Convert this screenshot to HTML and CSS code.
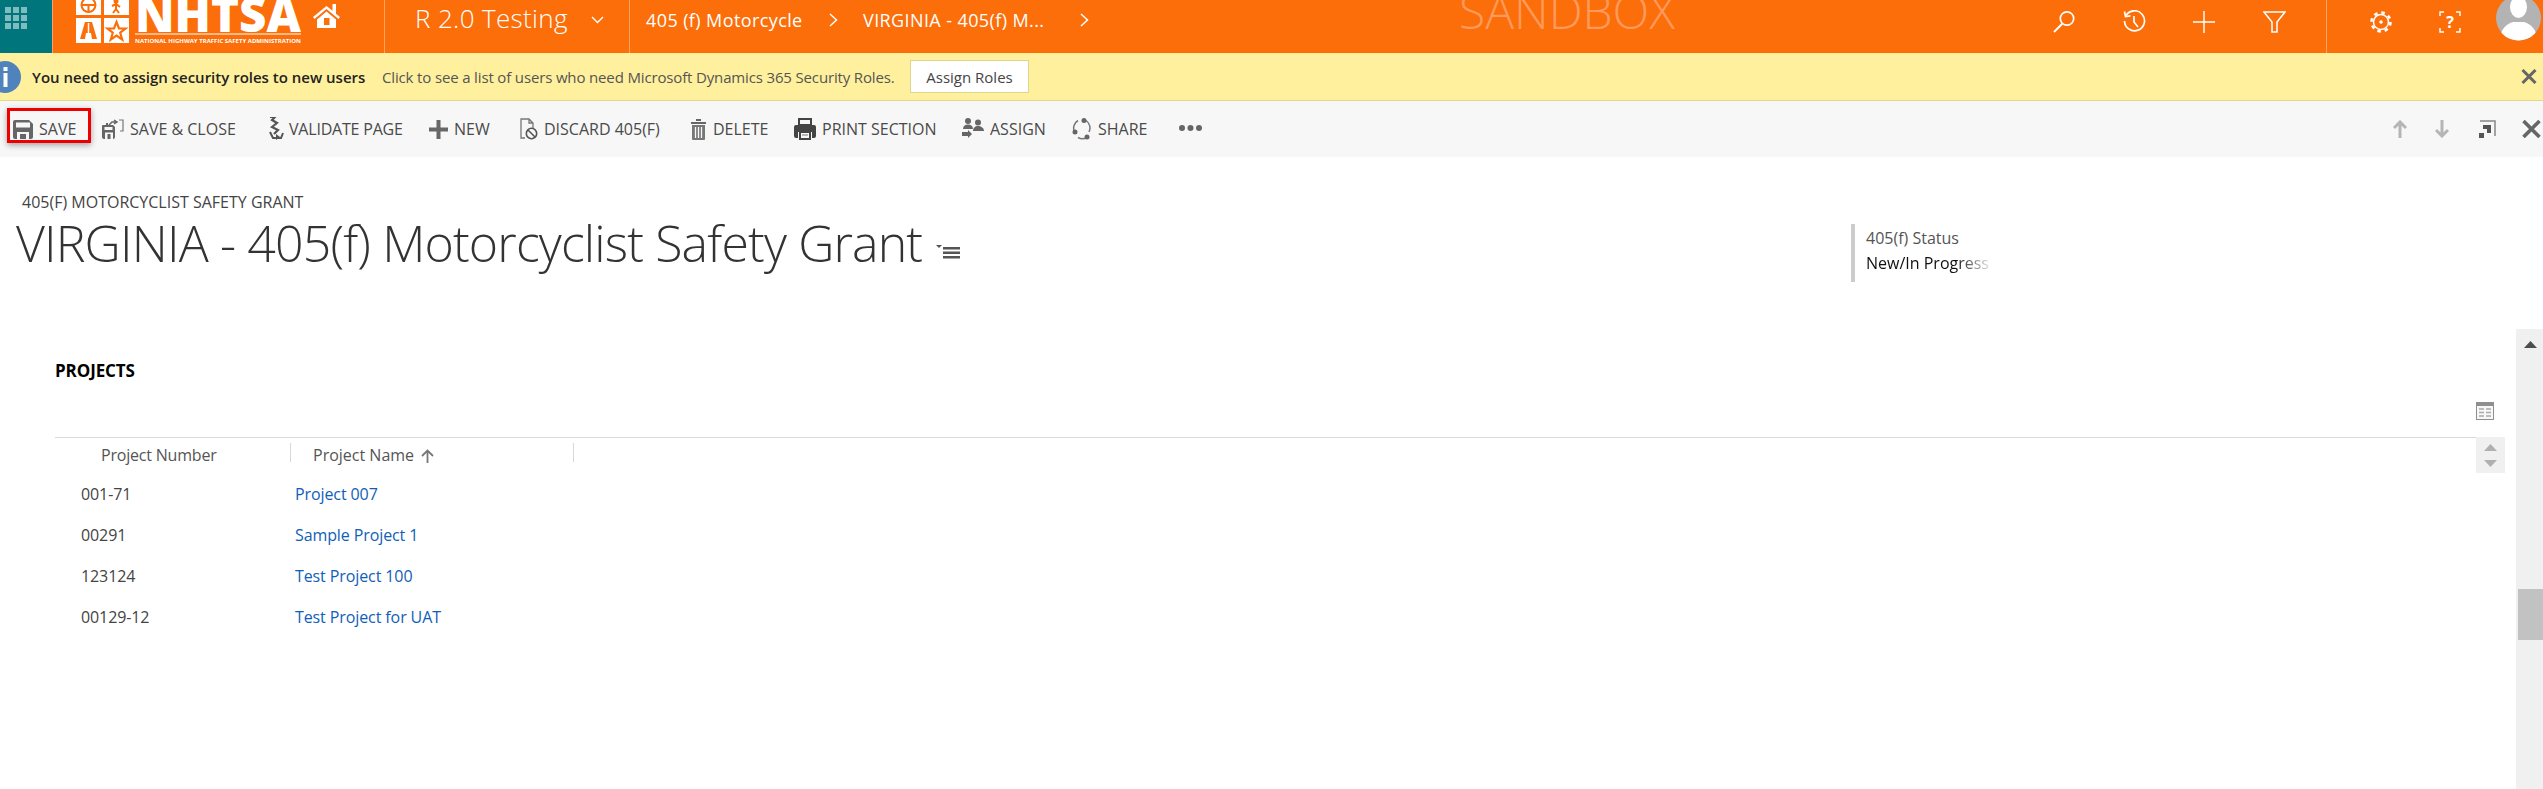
FILE: index.html
```html
<!DOCTYPE html>
<html lang="en">
<head>
<meta charset="utf-8">
<title>VIRGINIA - 405(f) Motorcyclist Safety Grant</title>
<link rel="stylesheet" href="styles.css">
</head>
<body>
<header class="topbar">
  <div class="waffle">
    <svg width="22" height="22" viewBox="0 0 22 22" fill="#7fbcc0"><rect x="0" y="0" width="6" height="6"/><rect x="8" y="0" width="6" height="6"/><rect x="16" y="0" width="6" height="6"/><rect x="0" y="8" width="6" height="6"/><rect x="8" y="8" width="6" height="6"/><rect x="16" y="8" width="6" height="6"/><rect x="0" y="16" width="6" height="6"/><rect x="8" y="16" width="6" height="6"/><rect x="16" y="16" width="6" height="6"/></svg>
  </div>
  <div class="brand">
    <svg class="logo" width="225" height="53" viewBox="0 0 225 53">
      <rect x="0" y="-4" width="25" height="19" fill="#fff"/>
      <rect x="28" y="-4" width="25" height="19" fill="#fff"/>
      <rect x="0" y="18" width="25" height="25" fill="#fff"/>
      <rect x="28" y="18" width="25" height="25" fill="#fff"/>
      <circle cx="12.500" cy="5" r="7" fill="none" stroke="#fb6e09" stroke-width="2"/>
      <path d="M6 5h13M12.500 5v7" stroke="#fb6e09" stroke-width="2"/>
      <circle cx="40" cy="1" r="2.500" fill="#fb6e09"/>
      <path d="M40 3v6M36 6l4-2 4 3M40 9l-3 4M40 9l3 4" stroke="#fb6e09" stroke-width="2" fill="none"/>
      <path d="M4 39 9 22h7l5 17h-5l-1-6h-5l-1 6z" fill="#fb6e09"/>
      <path d="M12.500 23v14" stroke="#fff" stroke-width="1.500"/>
      <path d="M40.500 22l2.500 6.500h6.500l-5.300 4.200 2 6.800-5.700-4-5.700 4 2-6.800-5.300-4.200H38z" fill="none" stroke="#fb6e09" stroke-width="2.200"/>
      <text class="logo-word" x="59" y="32" textLength="166" lengthAdjust="spacingAndGlyphs">NHTSA</text>
      <rect x="59" y="33" width="166" height="2" fill="#fdb888"/>
      <text class="logo-sub" x="59" y="43" textLength="166" lengthAdjust="spacingAndGlyphs">NATIONAL HIGHWAY TRAFFIC SAFETY ADMINISTRATION</text>
    </svg>
    <svg class="home" width="29" height="27" viewBox="0 0 29 27"><path d="M14.500 5 1 16l1.500 2L14.500 8l12 10 1.500-2-4-3.300V3h-3.500v6.800z" fill="#fff"/><path d="M5 18.500 14.500 10.500 24 18.500V27H5z" fill="#fff"/><rect x="12" y="17" width="5.500" height="7" fill="#fb6e09"/></svg>
  </div>
  <div class="app">
    <span class="app-name">R 2.0 Testing</span>
    <svg class="chev-down" width="13" height="8" viewBox="0 0 13 8"><path d="M1 1l5.500 5.500L12 1" fill="none" stroke="#fff" stroke-width="1.400"/></svg>
  </div>
  <nav class="crumbs">
    <span class="crumb">405 (f) Motorcycle</span>
    <svg width="9" height="14" viewBox="0 0 9 14"><path d="M1 1l6.500 6L1 13" fill="none" stroke="#fff" stroke-width="1.500"/></svg>
    <span class="crumb">VIRGINIA - 405(f) M...</span>
    <svg width="9" height="14" viewBox="0 0 9 14"><path d="M1 1l6.500 6L1 13" fill="none" stroke="#fff" stroke-width="1.500"/></svg>
  </nav>
  <div class="sandbox">SANDBOX</div>
  <div class="top-icons">
    <svg width="22" height="23" viewBox="0 0 22 23"><circle cx="14" cy="8.500" r="6.700" fill="none" stroke="#fff" stroke-width="1.700"/><path d="M9.500 13.500 1 22" stroke="#fff" stroke-width="2"/></svg>
    <svg width="23" height="23" viewBox="0 0 23 23" fill="none" stroke="#fff" stroke-width="1.700"><path d="M3 5.500A10 10 0 1 1 1.500 11"/><path d="M1.500 1.500 2.500 6.500 7.500 5.800"/><path d="M11 6v6l4 5"/></svg>
    <svg width="22" height="22" viewBox="0 0 22 22"><path d="M0 11h22M11 0v22" stroke="#fff" stroke-width="1.400"/></svg>
    <svg width="23" height="22" viewBox="0 0 23 22"><path d="M1 1h21l-8 10v10H9V11z" fill="none" stroke="#fff" stroke-width="1.500"/></svg>
  </div>
  <div class="top-tools">
    <svg width="22" height="22" viewBox="0 0 22 22" fill="none" stroke="#fff"><circle cx="11" cy="11" r="7.500" stroke-width="1.500"/><circle cx="11" cy="11" r="9.500" stroke-width="2.600" stroke-dasharray="3.600 3.860"/><circle cx="11" cy="11" r="1.800" fill="#fff" stroke="none"/></svg>
    <svg width="22" height="22" viewBox="0 0 22 22"><path d="M5 1H1v4M17 1h4v4M5 21H1v-4M17 21h4v-4" fill="none" stroke="#fff" stroke-width="1.400"/><text class="help-q" x="11" y="17" text-anchor="middle">?</text></svg>
    <svg class="avatar" width="45" height="41" viewBox="0 0 45 41"><defs><clipPath id="av"><circle cx="22.500" cy="18" r="22.500"/></clipPath></defs><g clip-path="url(#av)"><rect x="0" y="-5" width="45" height="46" fill="#b3b3b3"/><ellipse cx="22.500" cy="7" rx="8.500" ry="11" fill="#fff"/><path d="M4 41c0-13 7-17 13-19h11c6 2 13 6 13 19z" fill="#fff"/></g></svg>
  </div>
</header>

<section class="notice">
  <svg class="info" width="21" height="32" viewBox="11 0 21 32"><circle cx="16" cy="16" r="16" fill="#5083bb"/><rect x="14.500" y="6" width="4" height="4" fill="#fff"/><rect x="14.500" y="12" width="4" height="14" fill="#fff"/></svg>
  <strong class="notice-title">You need to assign security roles to new users</strong>
  <span class="notice-msg">Click to see a list of users who need Microsoft Dynamics 365 Security Roles.</span>
  <button class="assign-btn" type="button">Assign Roles</button>
  <svg class="notice-close" width="16" height="15" viewBox="0 0 16 15"><path d="M1.500 1 14.500 14M14.500 1 1.500 14" stroke="#666" stroke-width="3"/></svg>
</section>

<div class="toolbar">
  <div class="tools">
    <span class="tool tool-save">
      <svg width="20" height="19" viewBox="0 0 20 19"><path d="M0 2a2 2 0 0 1 2-2h14l4 4v13a2 2 0 0 1-2 2H2a2 2 0 0 1-2-2z" fill="#666"/><rect x="3" y="2.500" width="14" height="5" fill="#f7f7f7"/><rect x="4" y="12" width="12" height="7" fill="#f7f7f7"/><rect x="7" y="14" width="6" height="5" fill="#666"/></svg>
      SAVE
    </span>
    <span class="tool">
      <svg width="22" height="20" viewBox="0 0 22 20"><path d="M0 7a1 1 0 0 1 1-1h3V4h2v2h5l2 2v10a2 2 0 0 1-2 2H2a2 2 0 0 1-2-2z" fill="#666"/><rect x="2.500" y="8" width="8" height="3" fill="#f7f7f7"/><rect x="3" y="13.500" width="8" height="6.500" fill="#f7f7f7"/><rect x="5.500" y="15" width="3" height="5" fill="#666"/><path d="M7 6l3-3h4M12 1l3 2-3 2" fill="none" stroke="#666" stroke-width="1.500"/><path d="M17 1h4v11h-3" fill="none" stroke="#777" stroke-width="1.200"/></svg>
      SAVE &amp; CLOSE
    </span>
    <span class="tool tool-tight">
      <svg width="17" height="24" viewBox="0 0 17 24"><path d="M3 0h5L5 3l5 3-5 4 6 3-4 4" fill="none" stroke="#555" stroke-width="2.200"/><path d="M3 15l3 6h8l2-5" fill="none" stroke="#555" stroke-width="2"/><path d="M9 17v6l4-3z" fill="#555"/></svg>
      VALIDATE PAGE
    </span>
    <span class="tool">
      <svg width="19" height="19" viewBox="0 0 19 19"><path d="M9.500 0v19M0 9.500h19" stroke="#666" stroke-width="4"/></svg>
      NEW
    </span>
    <span class="tool">
      <svg width="18" height="22" viewBox="0 0 18 22" fill="none" stroke="#777" stroke-width="1.300"><path d="M5 20H1V1h8l4 4v5M9 1v4h4"/><circle cx="11.500" cy="15.500" r="5.200" stroke="#555" stroke-width="1.600"/><path d="M8 12l7 7" stroke="#555" stroke-width="1.600"/></svg>
      DISCARD 405(F)
    </span>
    <span class="tool">
      <svg width="17" height="22" viewBox="0 0 17 22"><path d="M1 4h15v2H1zM6 1h5v2H6z" fill="#666"/><path d="M2 7h13v14a1 1 0 0 1-1 1H3a1 1 0 0 1-1-1z" fill="#777"/><path d="M5.500 9v11M8.500 9v11M11.500 9v11" stroke="#f7f7f7" stroke-width="1.300"/></svg>
      DELETE
    </span>
    <span class="tool">
      <svg width="22" height="22" viewBox="0 0 22 22"><path d="M5 1h12v6H5z" fill="none" stroke="#444" stroke-width="2"/><path d="M2 7h18a2 2 0 0 1 2 2v9a2 2 0 0 1-2 2h-2v-6H4v6H2a2 2 0 0 1-2-2V9a2 2 0 0 1 2-2z" fill="#444"/><path d="M5 14h12v8H5z" fill="#444"/><path d="M7 15h8v5H7z" fill="#f7f7f7"/><path d="M8 17h6" stroke="#777"/></svg>
      PRINT SECTION
    </span>
    <span class="tool">
      <svg width="22" height="22" viewBox="0 0 22 22" fill="#666"><circle cx="6" cy="3" r="3"/><path d="M1 11c0-3 2-4.500 5-4.500s5 1.500 5 4.500z"/><circle cx="16" cy="4.500" r="3"/><path d="M11 13c0-3 2-5 5-5s6 2 6 5z"/><path d="M0 14h6v-2l4 4-4 4v-2H0z"/></svg>
      ASSIGN
    </span>
    <span class="tool">
      <svg width="20" height="22" viewBox="0 0 20 22" fill="none"><path d="M6 2.500A9 9 0 0 0 2.500 14M6 19.500a9 9 0 0 0 9 0M17 14A9 9 0 0 0 14 2.500" stroke="#777" stroke-width="1.500"/><circle cx="12" cy="2.500" r="2.500" fill="#666"/><circle cx="3" cy="14" r="2.500" fill="#666"/><circle cx="15" cy="19" r="2.500" fill="#666"/></svg>
      SHARE
    </span>
    <svg class="more" width="23" height="6" viewBox="0 0 23 6" fill="#666"><circle cx="3" cy="3" r="3"/><circle cx="11.500" cy="3" r="3"/><circle cx="20" cy="3" r="3"/></svg>
  </div>
  <div class="tool-right">
    <svg width="14" height="18" viewBox="0 0 14 18"><path d="M7 18V2M1 8l6-6 6 6" fill="none" stroke="#b5b5b5" stroke-width="3"/></svg>
    <svg width="14" height="18" viewBox="0 0 14 18"><path d="M7 0v16M1 10l6 6 6-6" fill="none" stroke="#b5b5b5" stroke-width="3"/></svg>
    <svg width="17" height="18" viewBox="0 0 17 18"><path d="M1 1h15v15" fill="none" stroke="#888" stroke-width="1.500"/><path d="M4 5h8v8H8V9H4zM0 13h5v5H0z" fill="#555"/></svg>
    <svg width="19" height="18" viewBox="0 0 19 18"><path d="M1.500 1 17.500 17M17.500 1 1.500 17" stroke="#666" stroke-width="3.600"/></svg>
  </div>
</div>

<div class="record-head">
  <div class="record-titles">
    <div class="record-type">405(F) MOTORCYCLIST SAFETY GRANT</div>
    <h1 class="record-name"><span>VIRGINIA - 405(f) Motorcyclist Safety Grant</span>
      <svg class="views" width="24" height="14" viewBox="0 0 24 14" fill="#555"><path d="M0 0h6L3 3z"/><rect x="7" y="2" width="17" height="2.500"/><rect x="7" y="6.500" width="17" height="2.500"/><rect x="7" y="11" width="17" height="2.500"/></svg>
    </h1>
  </div>
  <div class="status">
    <div class="status-label">405(f) Status</div>
    <div class="status-value">New/In Progress</div>
  </div>
</div>

<div class="page-body">
  <main class="section">
    <h2 class="section-title">PROJECTS</h2>
    <div class="grid-tools">
      <svg width="18" height="18" viewBox="0 0 18 18"><rect width="18" height="18" fill="#8f8f8f"/><rect x="1" y="4" width="16" height="13" fill="#f7f7f7"/><path d="M3 7h5M10 7h5M3 10.500h5M10 10.500h5M3 14h5M10 14h5" stroke="#aaa" stroke-width="1.500"/></svg>
    </div>
    <div class="grid-wrap">
      <table class="grid">
        <colgroup><col class="col-num"><col class="col-name"><col></colgroup>
        <thead>
          <tr>
            <th class="th-num">Project Number</th>
            <th><span class="th-sep th-name">Project Name
              <svg width="13" height="14" viewBox="0 0 13 14"><path d="M6.500 14V2M1 7l5.500-5.500L12 7" fill="none" stroke="#777" stroke-width="1.800"/></svg></span></th>
            <th><span class="th-sep"></span></th>
          </tr>
        </thead>
        <tbody>
          <tr><td class="td-num">001-71</td><td class="td-name"><a href="#">Project 007</a></td><td></td></tr>
          <tr><td class="td-num">00291</td><td class="td-name"><a href="#">Sample Project 1</a></td><td></td></tr>
          <tr><td class="td-num">123124</td><td class="td-name"><a href="#">Test Project 100</a></td><td></td></tr>
          <tr><td class="td-num">00129-12</td><td class="td-name"><a href="#">Test Project for UAT</a></td><td></td></tr>
        </tbody>
      </table>
      <div class="grid-scroll">
        <svg width="13" height="7" viewBox="0 0 13 7"><path d="M0 7 6.500 0 13 7z" fill="#b0b0b0"/></svg>
        <svg width="13" height="7" viewBox="0 0 13 7"><path d="M0 0h13L6.500 7z" fill="#b0b0b0"/></svg>
      </div>
    </div>
  </main>
  <aside class="scrollbar">
    <svg class="scroll-up" width="13" height="7" viewBox="0 0 13 7"><path d="M0 7 6.500 0 13 7z" fill="#4d4d4d"/></svg>
    <div class="scroll-thumb"></div>
  </aside>
</div>
</body>
</html>
```

FILE: styles.css
```css
*, *::before { box-sizing: border-box; }
html, body { margin: 0; padding: 0; height: 789px; overflow: hidden; background: #fff; }
body { font-family: "Open Sans", "Noto Sans", sans-serif; color: #444; display: flex; flex-direction: column; }

.topbar { flex: 0 0 53px; height: 53px; display: flex; background: #fb6e09; color: #fff; overflow: hidden; }
.waffle { flex: 0 0 53px; background: #00767c; border-right: 1px solid #f5a56b; padding: 7px 0 0 5px; }
.waffle svg { display: block; }
.brand { flex: 0 0 331px; display: flex; padding-left: 23px; gap: 11px; align-items: flex-start; }
.logo { display: block; flex: none; }
.logo-word { font: 800 48px "Open Sans", sans-serif; fill: #fff; }
.logo-sub { font: 700 5px "Open Sans", sans-serif; fill: #fff; }
.home { flex: none; margin-top: 1px; }
.app { flex: 0 0 245px; display: flex; align-items: center; padding: 0 25px 18px 30px; border-left: 1px solid #fda566; justify-content: space-between; }
.app-name { font-weight: 300; font-size: 26px; line-height: 36px; letter-spacing: .35px; white-space: nowrap; }
.chev-down { margin-top: 4px; }
.crumbs { flex: 0 0 830px; display: grid; grid-template-columns: 183px 34px 217px 20px; align-items: center; align-content: center; padding: 0 0 13px 16px; border-left: 1px solid #fda566; height: 53px; }
.crumb { font-size: 18px; line-height: 24px; letter-spacing: .4px; white-space: nowrap; }
.sandbox { flex: 0 0 215px; height: 21px; line-height: 21px; font-weight: 300; font-size: 48px; color: #ff9a5c; white-space: nowrap; }
.top-icons { margin-left: 378px; flex: 0 0 273px; display: grid; grid-template-columns: 70px 70px 70px 63px; align-items: center; padding-bottom: 10px; }
.top-tools { flex: 0 0 217px; display: grid; grid-template-columns: 69px 57px 45px; padding: 0 0 10px 43px; align-items: center; border-left: 1px solid #fda566; }
.help-q { font: 700 16px "Open Sans", sans-serif; fill: #fff; }
.avatar { align-self: start; }

.notice { flex: 0 0 48px; display: flex; align-items: center; background: #fff09d; border-bottom: 1px solid #e0d98a; }
.info { flex: none; }
.notice-title { flex: 0 0 350px; margin-left: 11px; font-size: 15px; font-weight: 600; color: #222; white-space: nowrap; }
.notice-msg { flex: 0 0 528px; font-size: 15px; letter-spacing: -.15px; color: #555; white-space: nowrap; }
.assign-btn { flex: 0 0 119px; height: 33px; background: #fff; border: 1px solid #dcd68f; font: 15px "Open Sans", sans-serif; color: #444; padding: 0; }
.notice-close { margin-left: auto; margin-right: 6px; }

.toolbar { flex: 0 0 56px; display: flex; align-items: center; justify-content: space-between; background: #f7f7f7; }
.tools { display: grid; grid-template-columns: 89px 165px 162px 91px 170px 104px 168px 110px 107px 23px; align-items: center; padding-left: 13px; }
.tool { display: flex; align-items: center; gap: 6px; font-size: 16px; line-height: 24px; color: #4a4a4a; white-space: nowrap; }
.tool-tight { letter-spacing: -.2px; gap: 5px; }
.tool-save { position: relative; }
.tool-save::before { content: ""; position: absolute; left: -6px; top: -9px; width: 84px; height: 35px; border: 3px solid #ee0000; box-shadow: 0 2px 6px rgba(0, 0, 0, .35); }
.more { margin-bottom: 2px; }
.tool-right { display: grid; grid-template-columns: 42px 44px 43px 21px; align-items: center; }

.record-head { flex: 0 0 172px; display: flex; }
.record-titles { flex: 0 0 1851px; padding: 34px 0 0 16px; }
.record-type { font-size: 16px; line-height: 22px; padding-left: 6px; color: #444; white-space: nowrap; }
.record-name { margin: -1px 0 0; display: flex; align-items: center; gap: 14px; font-size: 50px; line-height: 62px; letter-spacing: -.85px; font-weight: 300; color: #333; white-space: nowrap; }
.views { margin-top: 18px; }
.status { margin-top: 67px; height: 58px; border-left: 4px solid #ccc; padding-left: 11px; }
.status-label { font-size: 16px; line-height: 24px; padding-top: 2px; color: #555; white-space: nowrap; }
.status-value { font-size: 16px; line-height: 26px; width: 128px; color: #111; white-space: nowrap; overflow: hidden; -webkit-mask-image: linear-gradient(90deg, #000 70%, transparent 100%); mask-image: linear-gradient(90deg, #000 70%, transparent 100%); }

.page-body { flex: 1; display: flex; min-height: 0; }
.section { flex: 1; min-width: 0; padding: 32px 11px 0 55px; }
.section-title { margin: 0; font-size: 17px; line-height: 20px; font-weight: 700; letter-spacing: -.1px; color: #000; }
.grid-tools { display: flex; justify-content: flex-end; padding: 21px 11px 0 0; height: 39px; }
.grid-tools svg { display: block; }
.grid-wrap { display: flex; margin-top: 17px; }
.grid { flex: 1; min-width: 0; table-layout: fixed; border-collapse: collapse; border-top: 1px solid #d9d9d9; align-self: flex-start; }
.col-num { width: 235px; }
.col-name { width: 283px; }
.grid th { height: 36px; padding: 5px 0 0; vertical-align: top; font-weight: 400; text-align: left; font-size: 16px; line-height: 24px; color: #555; }
.grid td { height: 41px; padding: 0; font-size: 16px; letter-spacing: -.1px; color: #444; white-space: nowrap; }
.grid .th-num { padding-left: 46px; letter-spacing: -.2px; }
.th-sep { display: flex; align-items: flex-start; gap: 7px; height: 19px; border-left: 1px solid #d9d9d9; }
.th-sep svg { margin-top: 6px; }
.th-name { padding-left: 22px; }
.grid .td-num { padding-left: 26px; }
.grid .td-name { padding-left: 5px; }
.td-name a { color: #1160b7; text-decoration: none; }
.grid-scroll { flex: 0 0 29px; height: 36px; background: #f0f0f0; display: flex; flex-direction: column; align-items: center; gap: 9px; padding-top: 7px; }
.grid-scroll svg { display: block; }

.scrollbar { flex: 0 0 27px; background: #f0f0f0; display: flex; flex-direction: column; align-items: flex-end; }
.scroll-up { margin: 12px 6px 0 0; }
.scroll-thumb { width: 25px; height: 51px; margin-top: 241px; background: #c2c2c2; }
```
